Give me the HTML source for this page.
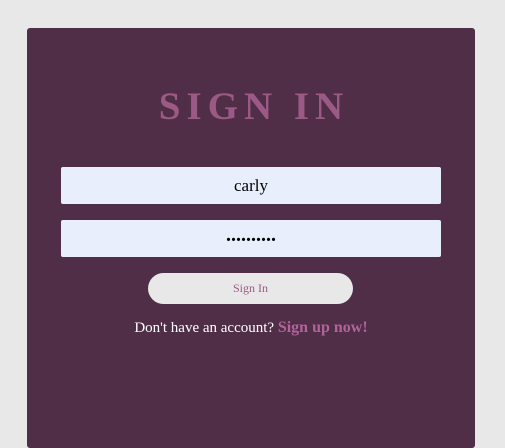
<!DOCTYPE html>
<html><head><style>
html,body{margin:0;padding:0;background:#e8e8e8;width:505px;height:403px;overflow:hidden;font-family:"Liberation Serif",serif}
.card{position:absolute;left:27px;top:28px;width:448px;height:420px;background:#502e47;border-radius:3px}
h1{position:absolute;left:0;width:448px;top:56px;margin:0;text-align:center;font-size:39px;font-weight:bold;letter-spacing:6px;color:#9b5a85;line-height:46px;padding-left:6px;box-sizing:border-box}
.inp{position:absolute;left:34px;width:380px;height:37px;background:#e8eefc;border-radius:2px;text-align:center;font-size:17px;color:#000;line-height:37px}
.btn{position:absolute;left:121px;top:245px;width:205px;height:31px;border-radius:16px;background:#e8e8e8;text-align:center;line-height:31px;font-size:12px;color:#9b5a85}
.foot{position:absolute;left:0;width:448px;top:291px;text-align:center;color:#fff;font-size:15px}
.foot b{color:#b0649a;font-size:16px}
</style></head><body>
<div class="card">
<h1>SIGN IN</h1>
<div class="inp" style="top:139px">carly</div>
<div class="inp" style="top:192px;font-size:20px;line-height:30px;font-weight:bold">..........</div>
<div class="btn">Sign In</div>
<div class="foot">Don't have an account? <b>Sign up now!</b></div>
</div>
</body></html>
